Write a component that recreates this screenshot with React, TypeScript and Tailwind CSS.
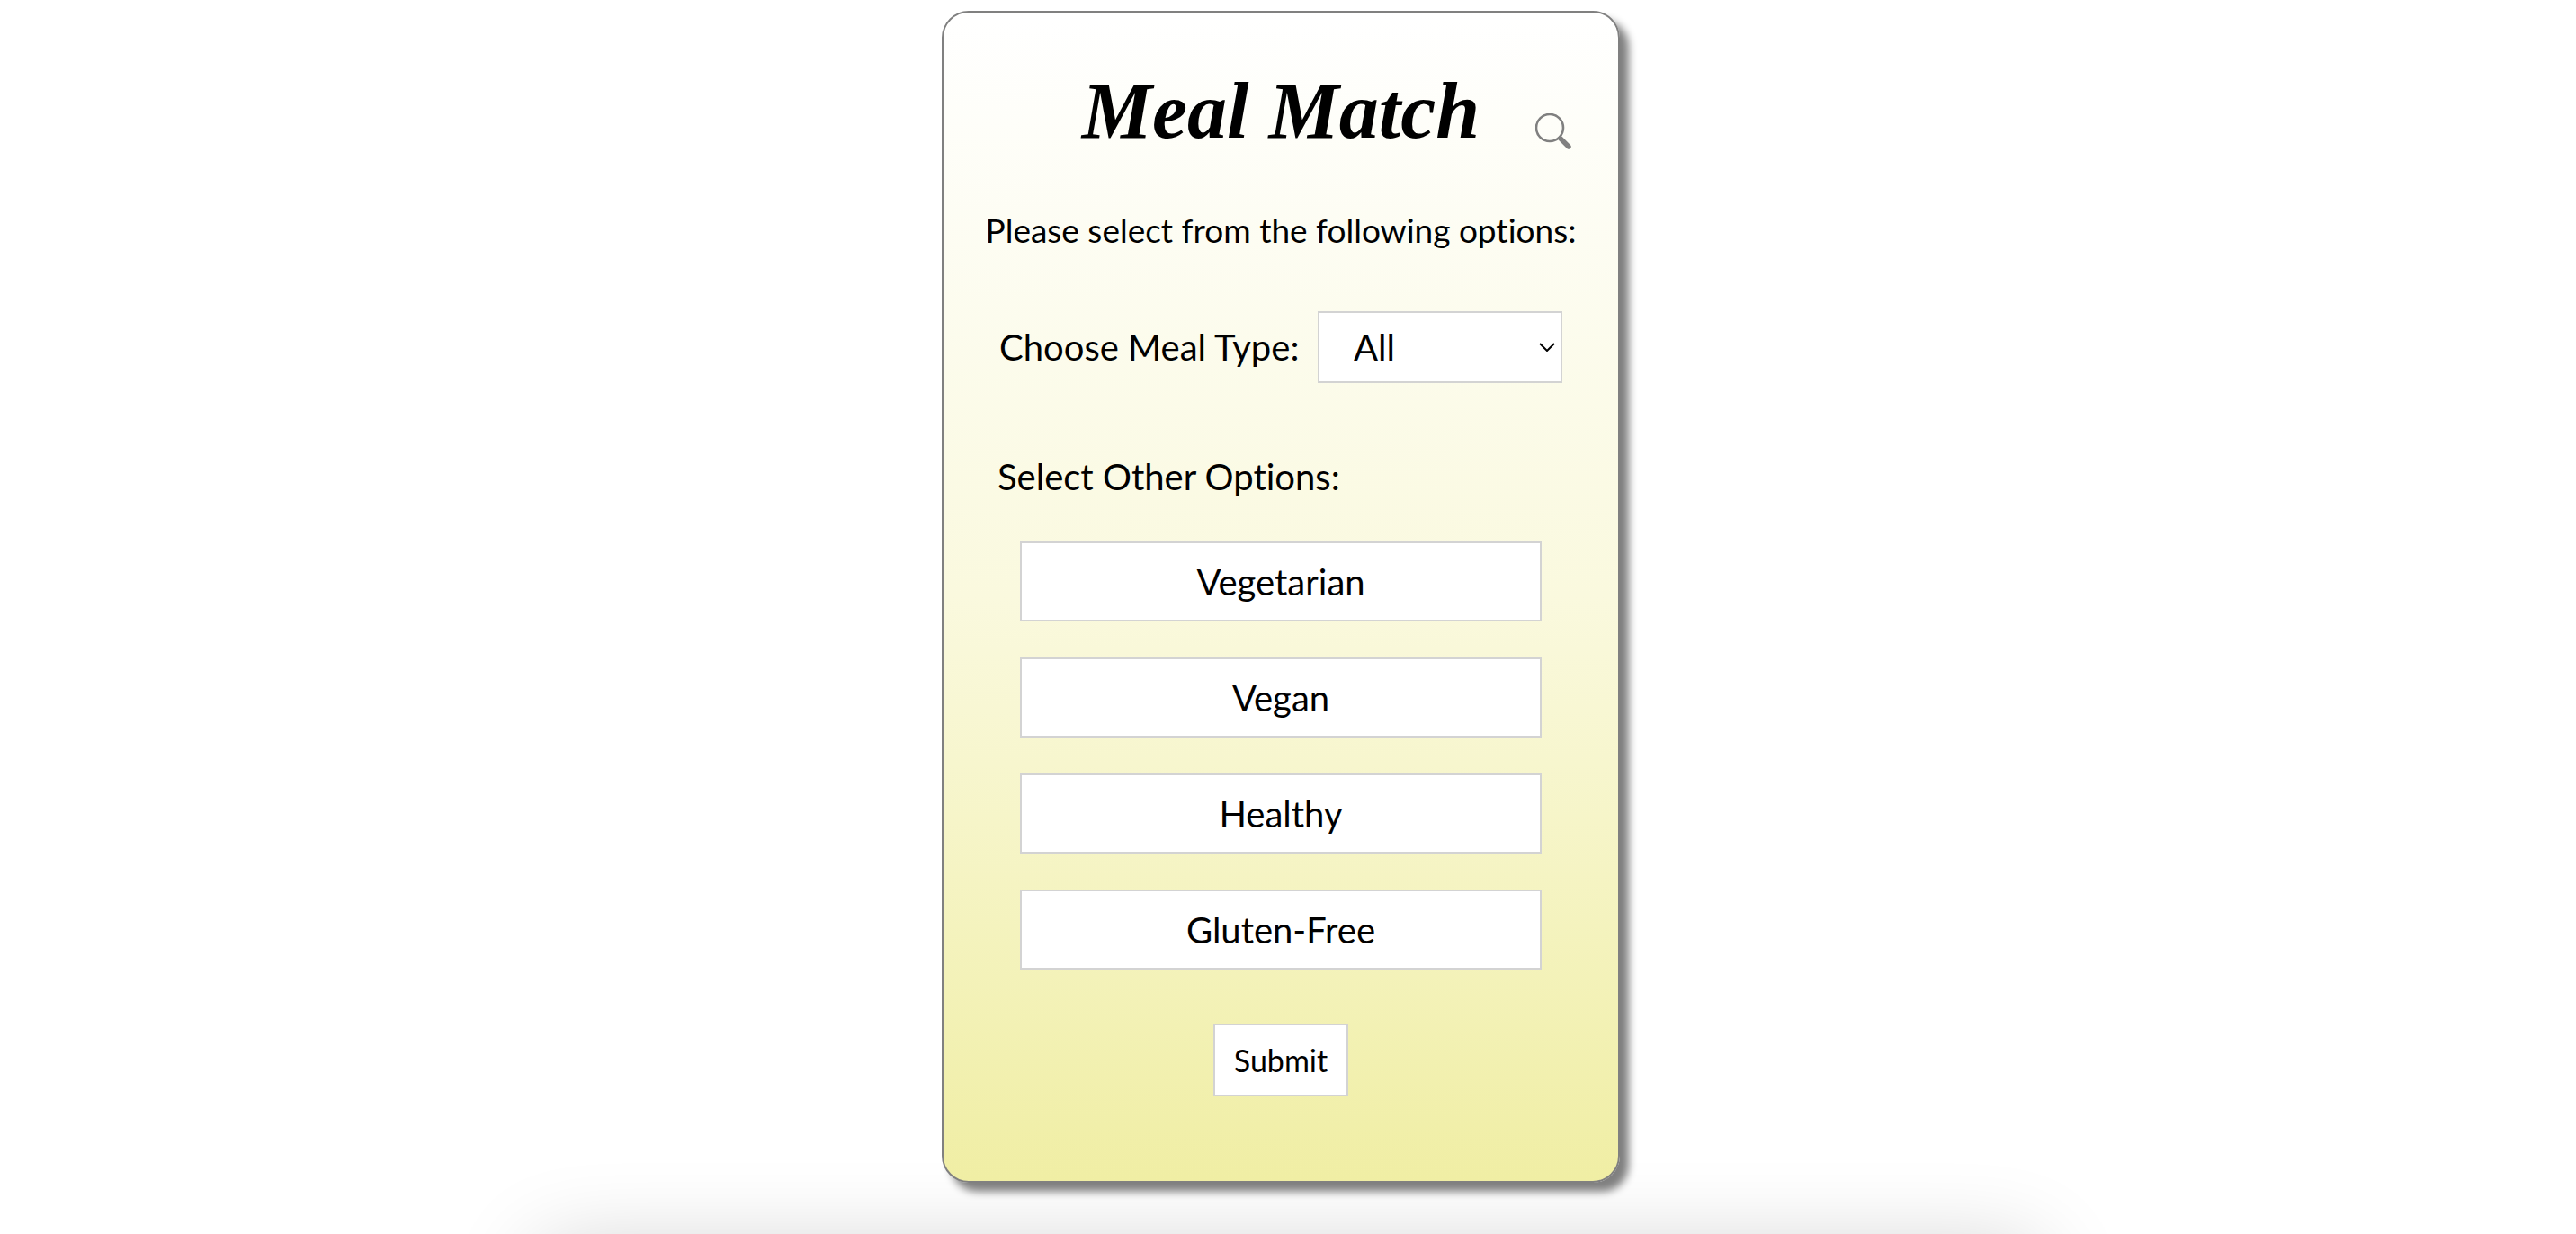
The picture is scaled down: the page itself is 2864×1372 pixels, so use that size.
import { useState } from "react";

const mealTypes = ["All", "Breakfast", "Lunch", "Dinner"];
const dietOptions = ["Vegetarian", "Vegan", "Healthy", "Gluten-Free"];

function SearchIcon() {
  return (
    <svg viewBox="0 0 40 40" className="size-10" fill="none" stroke="#808080" aria-hidden="true">
      <circle cx="16" cy="16" r="15" strokeWidth="2.6" />
      <path d="M28 28 37 37" strokeWidth="5.4" strokeLinecap="round" />
      <path d="M26 26 30 30" strokeWidth="4" />
    </svg>
  );
}

function MealTypeSelect() {
  return (
    <div className="flex items-center justify-between px-[62px]">
      <label htmlFor="meal-type" className="text-[40px] leading-12 whitespace-nowrap">
        Choose Meal Type:
      </label>
      <div className="relative">
        <select
          id="meal-type"
          className="h-20 w-[272px] appearance-none border-2 border-[#d3d3d3] bg-white pl-[38px] text-[40px] leading-12"
        >
          {mealTypes.map((type) => (
            <option key={type}>{type}</option>
          ))}
        </select>
        <svg
          viewBox="0 0 18 10"
          className="pointer-events-none absolute top-[35px] right-2 h-[10px] w-[18px]"
          fill="none"
          stroke="#000"
          strokeWidth="2"
          aria-hidden="true"
        >
          <path d="M1 1 9 9 17 1" />
        </svg>
      </div>
    </div>
  );
}

export default function App() {
  const [selected, setSelected] = useState<string[]>([]);

  const toggle = (option: string) =>
    setSelected((current) =>
      current.includes(option) ? current.filter((item) => item !== option) : [...current, option],
    );

  return (
    <div className="relative min-h-screen overflow-hidden bg-white pt-3 pr-4 font-['Lato',sans-serif] text-black [font-variant-ligatures:none]">
      <div className="pointer-events-none absolute inset-x-[600px] top-full mt-[18px] h-40 shadow-[0_0_100px_rgba(0,0,0,0.2)]" />

      <main className="relative mx-auto w-full max-w-[754px] rounded-[30px] border-2 border-[#808080] bg-linear-to-b from-white via-[#faf9de] to-[#f0eea4] pb-[94px] shadow-[10px_10px_10px_#808080]">
        <header className="grid grid-cols-[1fr_auto_1fr] items-center pt-[50px]">
          <h1 className="col-start-2 font-['Liberation_Serif',serif] text-[88px] leading-[120px] font-bold italic">
            Meal Match
          </h1>
          <button type="button" aria-label="Search" className="mt-11 mr-[52px] justify-self-end">
            <SearchIcon />
          </button>
        </header>

        <p className="mt-12 text-center text-[37px] leading-12">
          Please select from the following options:
        </p>

        <form className="mt-[66px]" onSubmit={(event) => event.preventDefault()}>
          <MealTypeSelect />

          <fieldset className="mt-20">
            <legend className="px-[60px] text-[40px] leading-12">Select Other Options:</legend>
            <div className="mx-auto mt-12 flex max-w-[580px] flex-col gap-10">
              {dietOptions.map((option) => (
                <button
                  key={option}
                  type="button"
                  aria-pressed={selected.includes(option)}
                  onClick={() => toggle(option)}
                  className="h-[89px] border-2 border-[#d3d3d3] bg-white text-[40px] leading-12 aria-pressed:bg-[#f0eea4]"
                >
                  {option}
                </button>
              ))}
            </div>
          </fieldset>

          <button
            type="submit"
            className="mx-auto mt-[60px] block h-[81px] w-[150px] border-2 border-[#d3d3d3] bg-white text-[34px] leading-10"
          >
            Submit
          </button>
        </form>
      </main>
    </div>
  );
}
